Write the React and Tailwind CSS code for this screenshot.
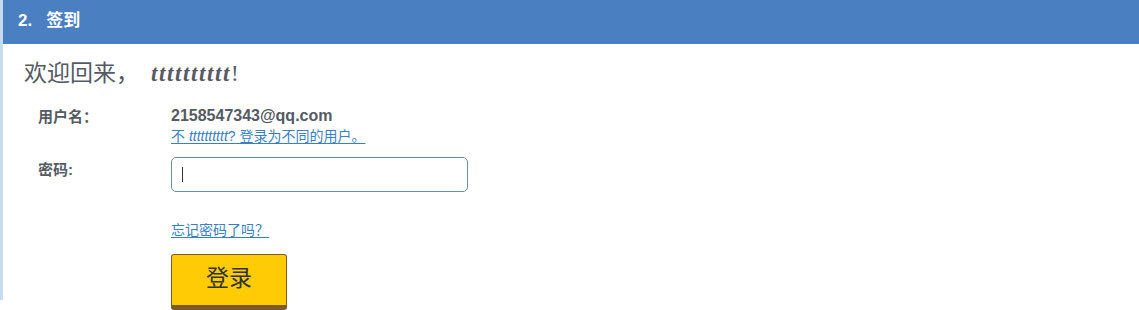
export default function App() {
  return (
    <div className="flex w-[1139px] h-[310px] bg-white overflow-hidden">
      <div className="w-[3px] h-[300px] bg-[#c6ddef] shrink-0" />
      <div className="flex-1 flex flex-col">
        <div className="h-[44px] shrink-0 bg-[#4a7fc2] flex items-center pl-[15px] pb-[3px] text-white font-bold text-[17px] [font-family:'Liberation_Sans','Noto_Sans_CJK_SC',sans-serif]">
          <span>2.</span>
          <span className="ml-[14px]">签到</span>
        </div>
        <div className="mt-[15px] ml-[21px] text-[23px] leading-[30px] text-[#555a63] [font-family:'Liberation_Serif','Noto_Sans_CJK_SC',serif]">
          <span>欢迎回来，</span>
          <span className="ml-[12px] font-bold italic tracking-[1.6px]">tttttttttt</span>
          <span>!</span>
        </div>
        <div className="mt-[17px] grid grid-cols-[133px_1fr] ml-[35px] [font-family:'Liberation_Sans','Noto_Sans_CJK_SC',sans-serif]">
          <div className="text-[15px] leading-[20px] text-[#555a63] font-semibold pt-[1px]">用户名：</div>
          <div className="flex flex-col">
            <div className="text-[16px] leading-[20px] font-bold text-[#555a63]">2158547343@qq.com</div>
            <a className="mt-[1px] text-[14px] leading-[18px] text-[#3a7fc3] underline underline-offset-2 w-fit">
              不 <i>tttttttttt</i>? 登录为不同的用户。
            </a>
          </div>
          <div className="mt-[14px] text-[15px] leading-[20px] text-[#555a63] font-semibold pt-[1px]">密码:</div>
          <div className="mt-[12px]">
            <div className="w-[297px] h-[35px] border border-[#6f8ea6] rounded-[5px] flex items-center pl-[10px]">
              <div className="w-[1px] h-[15px] bg-[#333]" />
            </div>
          </div>
          <div />
          <div className="mt-[29px] leading-[18px]">
            <a className="text-[14px] leading-[18px] text-[#3a7fc3] underline underline-offset-2">忘记密码了吗？</a>
          </div>
          <div />
          <div className="mt-[15px]">
            <button className="w-[116px] h-[56px] bg-[#ffcb05] border border-[#7d5a28] border-b-[5px] rounded-[3px] text-[23px] text-[#333] [font-family:'Liberation_Serif','Noto_Sans_CJK_SC',serif] pb-[2px]">
              登录
            </button>
          </div>
        </div>
      </div>
    </div>
  );
}
